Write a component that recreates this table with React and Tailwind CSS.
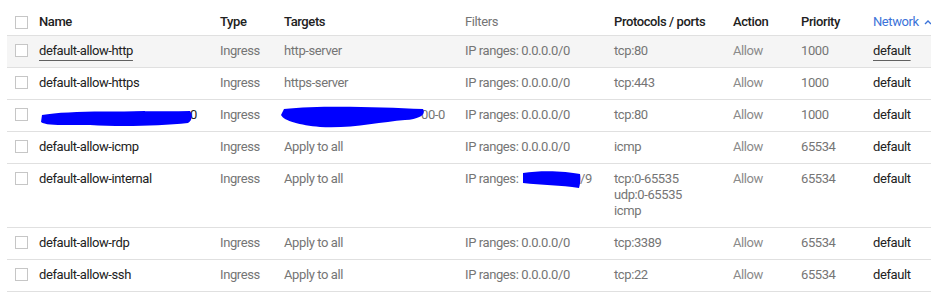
const cols =
  "grid grid-cols-[32px_181px_64px_181px_149px_119px_68px_72px_1fr]";

function Checkbox() {
  return (
    <div className="mt-[1px] h-[13px] w-[13px] border border-[#c6c6c6] bg-white" />
  );
}

function Blob({ w, h, d, className }) {
  return (
    <svg
      width={w}
      height={h}
      viewBox={`0 0 ${w} ${h}`}
      className={`absolute ${className}`}
    >
      <path d={d} fill="#0000ff" />
    </svg>
  );
}

const rows = [
  {
    name: "default-allow-http",
    target: "http-server",
    filter: "IP ranges: 0.0.0.0/0",
    ports: ["tcp:80"],
    priority: "1000",
    hover: true,
  },
  {
    name: "default-allow-https",
    target: "https-server",
    filter: "IP ranges: 0.0.0.0/0",
    ports: ["tcp:443"],
    priority: "1000",
  },
  {
    name: "hidden",
    target: "hidden",
    filter: "IP ranges: 0.0.0.0/0",
    ports: ["tcp:80"],
    priority: "1000",
  },
  {
    name: "default-allow-icmp",
    target: "Apply to all",
    filter: "IP ranges: 0.0.0.0/0",
    ports: ["icmp"],
    priority: "65534",
  },
  {
    name: "default-allow-internal",
    target: "Apply to all",
    filter: "hidden",
    ports: ["tcp:0-65535", "udp:0-65535", "icmp"],
    priority: "65534",
  },
  {
    name: "default-allow-rdp",
    target: "Apply to all",
    filter: "IP ranges: 0.0.0.0/0",
    ports: ["tcp:3389"],
    priority: "65534",
  },
  {
    name: "default-allow-ssh",
    target: "Apply to all",
    filter: "IP ranges: 0.0.0.0/0",
    ports: ["tcp:22"],
    priority: "65534",
  },
];

function NameCell({ row }) {
  if (row.name === "hidden") {
    return (
      <div className="relative h-4">
        <span className="absolute left-[151px] top-0">0</span>
        <Blob
          w={152}
          h={18}
          className="left-[1px] top-[2px]"
          d="M2 6 C30 1 90 3 150 2 C153 6 152 12 148 14 C120 17 80 18 50 16 C25 16 6 17 1 13 Z"
        />
      </div>
    );
  }
  return (
    <span
      className={
        row.hover
          ? "underline decoration-[#616161] underline-offset-[5px]"
          : ""
      }
    >
      {row.name}
    </span>
  );
}

function TargetCell({ row }) {
  if (row.target === "hidden") {
    return (
      <div className="relative h-4">
        <span className="absolute left-[137px] top-0">00-0</span>
        <Blob
          w={145}
          h={24}
          className="left-[-4px] top-[-2px]"
          d="M4 4 C40 0 100 2 143 4 C146 9 141 14 125 15 C100 17 70 24 40 22 C20 20 4 16 1 10 Z"
        />
      </div>
    );
  }
  return <span>{row.target}</span>;
}

function FilterCell({ row }) {
  if (row.filter === "hidden") {
    return (
      <div className="relative h-4">
        <span>IP ranges:</span>
        <span className="absolute left-[115px] top-0">/9</span>
        <Blob
          w={60}
          h={18}
          className="left-[56px] top-[-1px]"
          d="M2 3 C20 0 45 1 59 4 C60 9 59 15 58 18 C40 15 20 15 2 13 Z"
        />
      </div>
    );
  }
  return <span>{row.filter}</span>;
}

export default function App() {
  return (
    <div className="h-[304px] w-[931px] bg-white font-['Roboto',sans-serif] text-[13px] leading-4 tracking-[-0.4px] text-[#212121]">
      <div className="ml-[7px]">
        <div className={`${cols} h-[36px] items-center border-b border-[#e0e0e0] pt-[8px] font-medium`}>
          <div className="pl-2">
            <Checkbox />
          </div>
          <div>Name</div>
          <div>Type</div>
          <div>Targets</div>
          <div className="font-normal text-[#757575]">Filters</div>
          <div>Protocols / ports</div>
          <div>Action</div>
          <div>Priority</div>
          <div className="flex items-center gap-[5px] text-[#3b73d9]">
            <span className="font-normal">Network</span>
            <svg width="8" height="6" viewBox="0 0 8 6" fill="none">
              <path d="M1 5 L4 2 L7 5" stroke="#3b73d9" strokeWidth="1.4" />
            </svg>
          </div>
        </div>
        {rows.map((row, i) => (
          <div
            key={i}
            className={`${cols} border-b border-[#e0e0e0] pt-[7px] pb-[8px] ${
              row.hover ? "bg-[#f5f5f5]" : ""
            }`}
          >
            <div className="pl-2">
              <Checkbox />
            </div>
            <div>
              <NameCell row={row} />
            </div>
            <div className="text-[#757575]">Ingress</div>
            <div className="text-[#757575]">
              <TargetCell row={row} />
            </div>
            <div className="text-[#757575]">
              <FilterCell row={row} />
            </div>
            <div className="flex flex-col text-[#757575]">
              {row.ports.map((p) => (
                <span key={p}>{p}</span>
              ))}
            </div>
            <div className="text-[#8a8a8a]">Allow</div>
            <div className="text-[#757575]">{row.priority}</div>
            <div>
              <span
                className={
                  row.hover
                    ? "underline decoration-[#616161] underline-offset-[5px]"
                    : ""
                }
              >
                default
              </span>
            </div>
          </div>
        ))}
      </div>
    </div>
  );
}
